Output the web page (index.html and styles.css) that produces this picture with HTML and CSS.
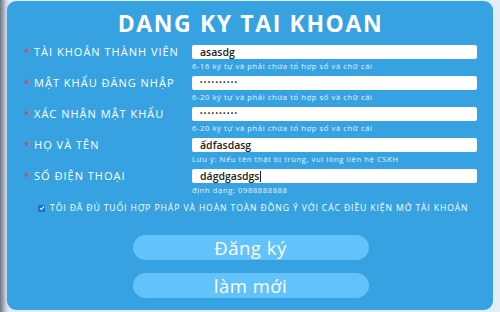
FILE: index.html
```html
<!DOCTYPE html>
<html lang="vi">
<head>
<meta charset="utf-8">
<title>Đăng ký tài khoản</title>
<link rel="stylesheet" href="styles.css">
</head>
<body>
<div class="panel">
  <h1 class="title">DANG KY TAI KHOAN</h1>
  <div class="row">
    <div class="label"><span class="req">*</span>TÀI KHOẢN THÀNH VIÊN</div>
    <div class="field">
      <div class="input">asasdg</div>
      <div class="hint">6-16 ký tự và phải chứa tổ hợp số và chữ cái</div>
    </div>
  </div>
  <div class="row">
    <div class="label"><span class="req">*</span>MẬT KHẨU ĐĂNG NHẬP</div>
    <div class="field">
      <div class="input pw">••••••••••</div>
      <div class="hint">6-20 ký tự và phải chứa tổ hợp số và chữ cái</div>
    </div>
  </div>
  <div class="row">
    <div class="label"><span class="req">*</span>XÁC NHẬN MẬT KHẨU</div>
    <div class="field">
      <div class="input pw">••••••••••</div>
      <div class="hint">6-20 ký tự và phải chứa tổ hợp số và chữ cái</div>
    </div>
  </div>
  <div class="row">
    <div class="label"><span class="req">*</span>HỌ VÀ TÊN</div>
    <div class="field">
      <div class="input">ấdfasdasg</div>
      <div class="hint">Lưu ý: Nếu tên thật bị trùng, vui lòng liên hệ CSKH</div>
    </div>
  </div>
  <div class="row">
    <div class="label"><span class="req">*</span>SỐ ĐIỆN THOẠI</div>
    <div class="field">
      <div class="input">dágdgasdgs<span class="caret"></span></div>
      <div class="hint">định dạng: 0988888888</div>
    </div>
  </div>
  <div class="agree">
    <span class="check"><svg viewBox="0 0 8 8" width="6" height="6"><path d="M1.3 4.2 L3.2 6 L6.8 1.8" fill="none" stroke="#fff" stroke-width="1.4"/></svg></span>
    <span>TÔI ĐÃ ĐỦ TUỔI HỢP PHÁP VÀ HOÀN TOÀN ĐỒNG Ý VỚI CÁC ĐIỀU KIỆN MỞ TÀI KHOẢN</span>
  </div>
  <div class="buttons">
    <button class="btn">Đăng ký</button>
    <button class="btn">làm mới</button>
  </div>
</div>
</body>
</html>
```
FILE: styles.css
```css
html, body {
  margin: 0;
  padding: 0;
}
body {
  width: 500px;
  height: 312px;
  overflow: hidden;
  background: linear-gradient(to right, #6f7480 0, #9aa3b3 3px, #c8d3e0 6px, #e3edf6 9px);
  font-family: "Open Sans", "Noto Sans", sans-serif;
}
.panel {
  margin: 1px 0 0 7px;
  width: 486px;
  height: 309px;
  box-sizing: border-box;
  padding: 10px 16px 0 17px;
  background: #37a2e2;
  border-radius: 9px;
  color: #fff;
}
.title {
  margin: 0 0 10px;
  text-align: center;
  font-size: 23px;
  line-height: 24px;
  font-weight: 700;
  letter-spacing: 1.6px;
}
.row {
  display: grid;
  grid-template-columns: 168px 285px;
  margin-bottom: 5px;
}
.label {
  font-size: 11px;
  line-height: 14px;
  letter-spacing: 1px;
  white-space: nowrap;
}
.req {
  color: #e8384a;
  margin-right: 3px;
}
.input {
  height: 14px;
  background: #fff;
  border-radius: 2px;
  padding: 0 8px;
  color: #222;
  font-size: 10.5px;
  line-height: 14px;
  font-weight: 600;
  display: flex;
  align-items: center;
}
.input.pw {
  font-size: 6.5px;
  letter-spacing: 1.4px;
}
.caret {
  width: 1px;
  height: 11px;
  background: #222;
  margin-left: 1px;
}
.hint {
  margin-top: 2px;
  font-size: 7.6px;
  line-height: 10px;
  letter-spacing: 0.6px;
  color: #e6f3fd;
}
.agree {
  display: flex;
  align-items: center;
  gap: 5px;
  margin: 8px 0 0 14px;
  font-size: 8.6px;
  line-height: 10px;
  letter-spacing: 0.9px;
  white-space: nowrap;
}
.check {
  width: 7px;
  height: 7px;
  background: #1a6fd6;
  border-radius: 1px;
  display: flex;
  align-items: center;
  justify-content: center;
}
.buttons {
  display: flex;
  flex-direction: column;
  align-items: center;
  gap: 13px;
  margin-top: 22px;
}
.btn {
  width: 236px;
  height: 25px;
  border: none;
  border-radius: 13px;
  background: #62c2fa;
  color: #fff;
  font-family: "Open Sans", "Noto Sans", sans-serif;
  font-size: 18.5px;
  line-height: 25px;
  letter-spacing: 0.5px;
  padding: 0;
}
```
